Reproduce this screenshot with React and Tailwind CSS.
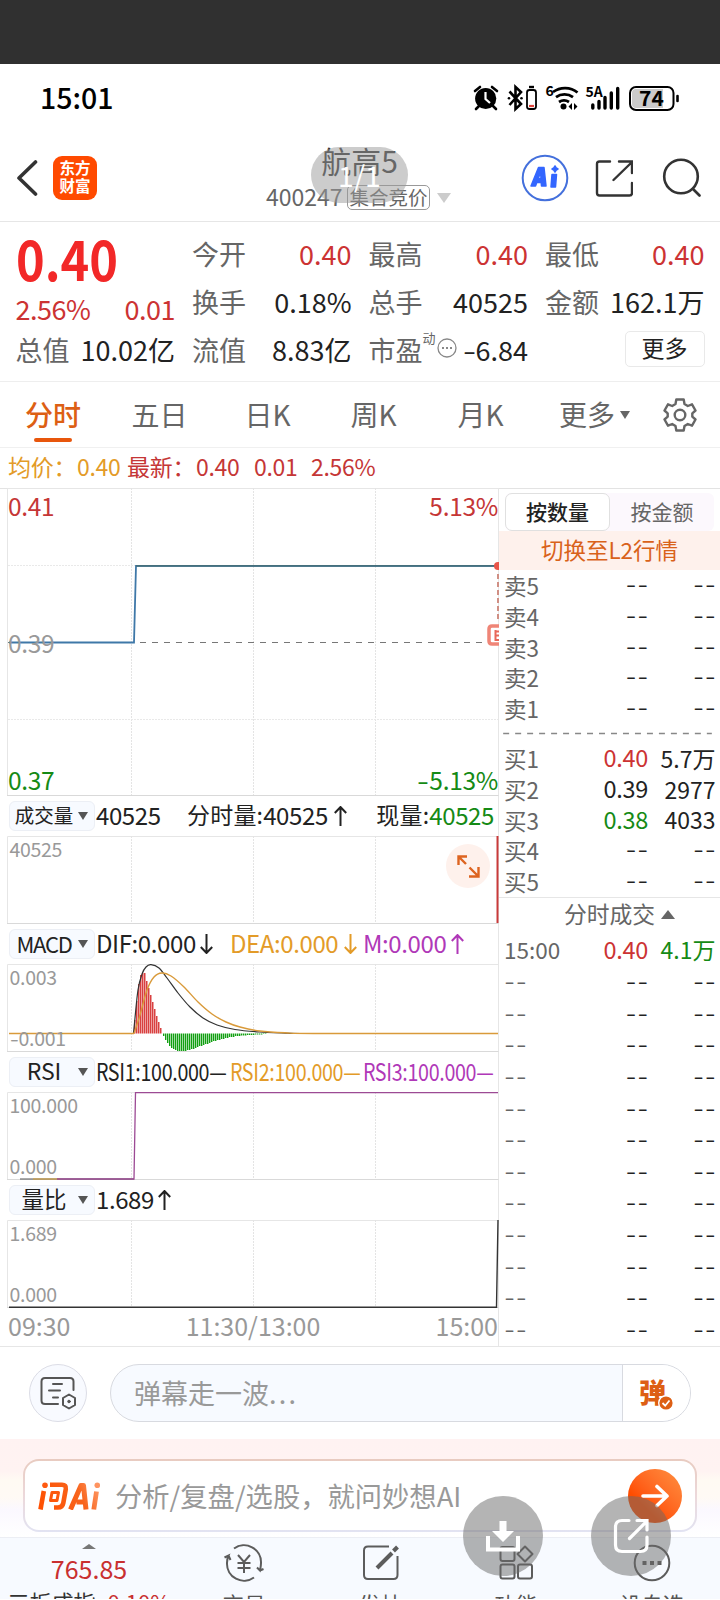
import React from "react";

const FONT = "font-['Noto_Sans_CJK_SC','Noto_Sans',sans-serif]";

/* ---------- shared pieces ---------- */

function Caret({ className = "", up = false }) {
  return (
    <svg viewBox="0 0 10 8" preserveAspectRatio="none" className={"shrink-0 " + className} fill="currentColor">
      <path d={up ? "M0 8L5 0L10 8Z" : "M0 0H10L5 8Z"} />
    </svg>
  );
}

function Arrow({ down = false, className = "" }) {
  return (
    <svg viewBox="0 0 13 20" className={"h-5 w-[13px] shrink-0 " + className} fill="none" stroke="currentColor" strokeWidth="2">
      <path d={down ? "M6.5 0V19M0.8 13L6.5 19L12.2 13" : "M6.5 20V1M0.8 7L6.5 1L12.2 7"} />
    </svg>
  );
}

function Dashes({ className = "" }) {
  return <span className={"mr-[-1px] font-['Inter',sans-serif] text-[24.500px] leading-none font-light tracking-[0.700px] " + className}>--</span>;
}

/* ---------- top bars ---------- */

function StatusBar() {
  return (
    <div className="flex h-[70px] shrink-0 items-center pl-[40px] text-black">
      <span className="w-[434px] pb-[3px] text-[28.500px] leading-none font-medium">15:01</span>
      <svg viewBox="474 86 208 28" className="h-7 w-[208px] overflow-visible" fill="none" stroke="#000" strokeWidth="2.2">
        <circle cx="485.7" cy="99.5" r="10.6" fill="#000" stroke="none" />
        <path d="M475 92L480 88M492 88L497 92M479 107L476 110M493 107L496 110" strokeLinecap="round" strokeWidth="2.6" />
        <path d="M485.5 93V100L490 104" stroke="#fff" />
        <path d="M509.500 92.500L521 105L515.500 110V88L521 93L509.500 106" strokeWidth="2.600" />
        <circle cx="509" cy="99.200" r="1.300" fill="#000" stroke="none" />
        <circle cx="521.500" cy="99.200" r="1.300" fill="#000" stroke="none" />
        <rect x="527" y="91" width="9" height="19" rx="2.500" strokeWidth="1.800" />
        <path d="M529 88H534" strokeWidth="2.4" />
        <path d="M529 107H534" stroke="#e0433a" />
        <path d="M553 93A20 20 0 0 1 577.500 93.500M556 98.200A14.500 14.500 0 0 1 573 98.200M559 103A9 9 0 0 1 569 103" strokeWidth="2.800" />
        <circle cx="563.5" cy="107.500" r="3" fill="#000" stroke="none" />
        <path d="M572 104L568.500 107.500L572 111ZM574 104L577.500 107.500L574 111Z" fill="#000" stroke="none" />
        <path d="M592.800 106V109M599 102.500V109M605 98.500V109M611.300 94V109M617.700 89.500V109" strokeWidth="3.400" strokeLinecap="round" />
        <rect x="630" y="88" width="43.500" height="23" rx="6" fill="#fff" strokeWidth="2" />
        <path d="M636 90H663V109H636Q632 109 632 105V94Q632 90 636 90Z" fill="#cbcbcb" stroke="none" />
        <path d="M677.500 97V102" strokeWidth="2.600" strokeLinecap="round" />
        <g fill="#000" stroke="none" fontFamily="Noto Sans CJK SC">
          <text x="545.500" y="97" fontSize="14" fontWeight="700">6</text>
          <text x="585.500" y="98" fontSize="14" fontWeight="700">5A</text>
          <text x="651.500" y="107" fontSize="21" fontWeight="700" textAnchor="middle">74</text>
        </g>
      </svg>
    </div>
  );
}

function Header() {
  return (
    <header className="relative flex h-[88px] shrink-0 items-center border-b border-[#e6e6e6] text-[#333]">
      <svg viewBox="0 0 24 36" className="ml-[15px] h-9 w-6" fill="none" stroke="#333" strokeWidth="3.600" strokeLinecap="round" strokeLinejoin="round">
        <path d="M20.500 2L4 18L20.500 34" />
      </svg>
      <div className="ml-[14px] flex h-[44px] w-[44px] flex-col items-center justify-center rounded-[9px] bg-[#ff4a00] pb-[3px] text-[15.500px] leading-[18px] font-bold text-white">
        <span>东方</span>
        <span>财富</span>
      </div>
      <div className="ml-[169px] flex w-[189px] flex-col items-center">
        <div className="h-[40px] pr-[2px] text-[30px] leading-[30px]">航高5</div>
        <div className="flex h-[26px] w-[189px] items-center text-[#666]">
          <span className="w-[81px] pb-[2px] text-[23px] leading-none">400247</span>
          <span className="flex h-[25px] w-[83px] items-center justify-center rounded-[5px] border border-[#999] pb-[2px] text-[19.500px] leading-none">
            集合竞价
          </span>
          <Caret className="ml-[7px] h-[10px] w-[14px] text-[#ccc]" />
        </div>
      </div>
      <svg viewBox="0 0 48 48" className="ml-[66px] h-12 w-12">
        <circle cx="24" cy="24" r="22.300" fill="#fff" stroke="#4470dc" strokeWidth="2" />
        <g fill="#3366ff" stroke="#3366ff" strokeWidth="1.500" strokeLinejoin="round">
          <path fillRule="evenodd" d="M10 32L17.500 13.500H23L25 32H20.500L20.200 28.500H15.800L14.500 32ZM17 24.500H20L19.700 19Z" />
          <path d="M31 20.500H35.500L34.500 33H30ZM34 12L35.200 14L37 15L35.200 16L34 18L32.800 16L31 15L32.800 14Z" />
        </g>
      </svg>
      <svg viewBox="0 0 38 38" className="ml-[26px] h-[38px] w-[38px]" fill="none" stroke="#333" strokeWidth="2.400" strokeLinecap="round">
        <path d="M15 2.500H4.500Q2 2.500 2 5V34Q2 36.500 4.500 36.500H34.500Q37 36.500 37 34V24M24 2.500H37V14M36 4L18.500 21" />
      </svg>
      <svg viewBox="0 0 40 40" className="ml-[27.500px] h-10 w-10" fill="none" stroke="#333" strokeWidth="2.600" strokeLinecap="round">
        <circle cx="20" cy="18.500" r="16.800" />
        <path d="M32 31L38.500 37.500" />
      </svg>
      <div className="absolute top-[13px] left-[311px] flex h-[56px] w-[97px] items-center justify-center rounded-full bg-[#999]/50 text-[28.500px] leading-none text-white">
        1/1
      </div>
    </header>
  );
}

/* ---------- quote ---------- */

function Field({ label, value, tone = "text-[#222]" }) {
  return (
    <div className="flex h-12 items-center justify-between pb-[2px] text-[27px] leading-none">
      <span className="text-[#666]">{label}</span>
      <span className={tone}>{value}</span>
    </div>
  );
}

function Quote() {
  const red = "text-[#cc3333]";
  return (
    <section className="grid h-[160px] shrink-0 grid-cols-4 gap-x-[17px] border-b border-[#eee] px-[15.500px] pt-2 whitespace-nowrap">
      <div>
        <div className="flex h-[64px] items-center">
          <span className="w-[100px] origin-left scale-x-[0.870] pb-[10px] text-[56px] leading-none font-bold text-[#f22828]">0.40</span>
        </div>
        <div className={"flex h-[32px] items-center justify-between pb-[3px] text-[27px] leading-none tracking-[-0.5px] " + red}>
          <span>2.56%</span>
          <span>0.01</span>
        </div>
        <Field label="总值" value="10.02亿" />
      </div>
      <div>
        <Field label="今开" value="0.40" tone={red} />
        <Field label="换手" value="0.18%" />
        <Field label="流值" value="8.83亿" />
      </div>
      <div>
        <Field label="最高" value="0.40" tone={red} />
        <Field label="总手" value="40525" />
        <div className="flex h-12 items-center pb-[2px] text-[27px] leading-none text-[#666]">
          <span>市盈</span>
          <span className="mb-6 text-[13px]">动</span>
          <svg viewBox="0 0 20 20" className="mb-[3px] ml-[1px] h-5 w-5 shrink-0" fill="none" stroke="#888" strokeWidth="1.300">
            <circle cx="10" cy="10" r="9" />
            <path d="M5 10H7M9 10H11M13 10H15" strokeWidth="2" />
          </svg>
          <span className="ml-auto flex text-[#222]">
            <span className="w-[13px] origin-left scale-x-[1.400]">-</span>
            <span>6.84</span>
          </span>
        </div>
      </div>
      <div>
        <Field label="最低" value="0.40" tone={red} />
        <Field label="金额" value="162.1万" />
        <button className="mt-[5px] ml-auto flex h-[36px] w-[80px] items-center justify-center rounded-[5px] border border-[#e9e9e9] pb-[4px] text-[23px] leading-none text-[#222]">
          更多
        </button>
      </div>
    </section>
  );
}

function PeriodTabs() {
  return (
    <nav className="flex h-[66px] shrink-0 items-center border-b border-[#f0f0f0] text-[28px] leading-none whitespace-nowrap text-[#666]">
      <div className="relative flex h-full w-[106px] items-center justify-center pb-[2px] font-medium text-[#dd5f14]">
        分时
        <span className="absolute bottom-[5px] left-[34px] h-[4px] w-[38px] rounded-full bg-[#e8560c]" />
      </div>
      <span className="w-[107px] pb-[2px] text-center">五日</span>
      <span className="w-[109px] pb-[2px] text-center">日K</span>
      <span className="w-[103px] pb-[2px] text-center">周K</span>
      <span className="w-[111px] pb-[2px] text-center">月K</span>
      <span className="ml-[23px] pb-[2px]">更多</span>
      <Caret className="ml-[5px] h-[8px] w-[10px]" />
      <svg viewBox="0 0 34 34" className="ml-[33px] h-[34px] w-[34px]" fill="none" stroke="#666" strokeWidth="2.400" strokeLinejoin="round">
        <path d="M13.300 1.500H20.700L21.500 6L24.800 8L29 6.300L32.500 12.500L29.300 15.300V18.700L32.500 21.500L29 27.700L24.800 26L21.500 28L20.700 32.500H13.300L12.500 28L9.200 26L5 27.700L1.500 21.500L4.700 18.700V15.300L1.500 12.500L5 6.300L9.200 8L12.500 6Z" />
        <circle cx="17" cy="17" r="5.300" />
      </svg>
    </nav>
  );
}

function PriceLine() {
  return (
    <div className="flex h-[41px] shrink-0 items-center border-b border-[#e3e3e3] pb-[3px] pl-2 text-[23px] leading-none tracking-[-0.3px] whitespace-nowrap text-[#c53636]">
      <span className="w-[69px] text-[#e39b28]">均价：</span>
      <span className="w-[50px] text-[#e39b28]">0.40</span>
      <span className="w-[69px]">最新：</span>
      <span className="w-[58px]">0.40</span>
      <span className="w-[57px]">0.01</span>
      <span>2.56%</span>
    </div>
  );
}

/* ---------- charts ---------- */

function Frame({ top, height, children, labels }) {
  const bottom = top + height - 1;
  return (
    <div className="relative leading-none">
      <svg viewBox={`0 ${top} 499 ${height}`} width="499" height={height} className="block" fill="none">
        <path d={`M7.500 ${bottom + 0.5}V${top + 0.5}H498.500`} stroke="#e6e6e6" />
        <path d={`M7 ${bottom + 0.5}H498.500`} stroke="#d9d9d9" />
        <path d={`M131.500 ${top}V${bottom}M253.500 ${top}V${bottom}M375.500 ${top}V${bottom}`} stroke="#e4e4e4" strokeDasharray="2 1" />
        {children}
      </svg>
      {labels}
    </div>
  );
}

function IndicatorBar({ name, wide = "text-[19.500px]", children }) {
  return (
    <div className="flex h-10 items-center pl-[9px] text-[24px] leading-none whitespace-nowrap text-[#222]">
      <div className="flex h-[30px] w-[86px] items-center rounded-[6px] border border-[#eceff5] bg-[#f7faff]">
        <span className={"w-[68px] pb-[3px] text-center " + wide}>{name}</span>
        <Caret className="h-[8px] w-[10px] text-[#555]" />
      </div>
      <div className="ml-[1px] flex items-center pb-[3px] tracking-[-0.4px]">{children}</div>
    </div>
  );
}

/* Smooth curve through a list of points (Catmull-Rom as cubic segments). */
function smooth(points) {
  let d = `M${points[0][0]} ${points[0][1]}`;
  for (let i = 0; i < points.length - 1; i++) {
    const p0 = points[i - 1] || points[i];
    const p1 = points[i];
    const p2 = points[i + 1];
    const p3 = points[i + 2] || p2;
    d += `C${p1[0] + (p2[0] - p0[0]) / 6} ${p1[1] + (p2[1] - p0[1]) / 6} ${p2[0] - (p3[0] - p1[0]) / 6} ${p2[1] - (p3[1] - p1[1]) / 6} ${p2[0]} ${p2[1]}`;
  }
  return d;
}

const DIF = [[133.5, 1033], [135, 1018], [138, 990], [142, 974], [146, 967], [151, 964.6], [159, 968], [167, 978], [178, 993], [190, 1007], [203, 1018], [217, 1025], [235, 1029.5], [260, 1032], [290, 1033.3], [320, 1033.5]];
const DEA = [[134, 1033.5], [140, 1015], [147, 990], [154, 977], [162, 973], [171, 976], [184, 987], [198, 1002], [212, 1014], [226, 1022], [240, 1027], [260, 1031], [285, 1032.8], [320, 1033.5], [498, 1033.5]];
const RED_TOPS = [1020, 1001, 984, 975, 973, 973, 981, 988, 995, 1002, 1009, 1016, 1022, 1028];
const GREEN_BOTTOMS = [
  1036, 1040, 1043, 1046, 1048, 1049, 1050, 1051, 1051, 1051, 1051, 1051, 1050, 1050, 1049, 1049, 1048, 1047, 1046, 1046, 1045, 1044, 1044,
  1043, 1042, 1041, 1041, 1040, 1040, 1039, 1039, 1038, 1038, 1037, 1037, 1037, 1036, 1036, 1036, 1035.500, 1035.500, 1035.500, 1035, 1035,
  1035, 1035, 1034.500, 1034.500, 1034.500, 1034.500, 1034, 1034,
];

const small = "absolute left-[9.500px] text-[19.500px] tracking-[-0.300px] text-[#999] ";

function Charts() {
  return (
    <div className="w-[499px] shrink-0">
      <Frame
        top={488}
        height={308}
        labels={
          <div className="text-[24.500px] tracking-[-0.3px]">
            <span className="absolute top-[6px] left-[8px] text-[#c53636]">0.41</span>
            <span className="absolute top-[142.500px] left-[8px] text-[#999]">0.39</span>
            <span className="absolute top-[279.500px] left-[8px] text-[#158a15]">0.37</span>
            <span className="absolute top-[6px] right-[1px] text-[#c53636]">5.13%</span>
            <span className="absolute top-[279.500px] right-[1px] flex text-[#158a15]">
              <span className="w-[12px] origin-left scale-x-[1.400]">-</span>
              <span>5.13%</span>
            </span>
          </div>
        }
      >
        <path d="M8 565.500H498M8 719.500H498" stroke="#e9e9e9" strokeDasharray="2 1" />
        <path d="M8 642.500H498" stroke="#777" strokeDasharray="6 6" />
        <path d="M9 642.500H134L136 565.800H498" stroke="#3f78a8" strokeWidth="1.800" />
        <path d="M136 565.800H498" stroke="#456f7c" strokeWidth="1.800" />
        <path d="M498 574V622" stroke="#d08f84" strokeWidth="2" strokeDasharray="5 3" />
        <circle cx="498" cy="566" r="4" fill="#e8564a" />
        <path d="M499 626H492Q489 626 489 629V641Q489 644 492 644H499" stroke="#ef8577" strokeWidth="3.500" fill="#fff" />
        <path d="M495.500 630V641M495 631.500H499M495 635.500H499M495 640H499" stroke="#e8685a" strokeWidth="2" />
      </Frame>

      <IndicatorBar name="成交量">
        <span className="w-[91px]">40525</span>
        <span className="text-[23px] tracking-[0.2px]">分时量:</span>
        <span className="mr-[6px]">40525</span>
        <Arrow className="mt-[3px]" />
        <span className="ml-[29.500px] text-[23px] tracking-[0.2px]">现量:</span>
        <span className="text-[#158a15]">40525</span>
      </IndicatorBar>
      <Frame
        top={836}
        height={88}
        labels={
          <>
            <span className={small + "top-[3px]"}>40525</span>
            <svg viewBox="0 0 44 44" className="absolute top-[8px] left-[446px] h-11 w-11" fill="none" stroke="#dd6420" strokeWidth="2.400">
              <circle cx="22" cy="22" r="22" fill="#fef1ec" stroke="none" />
              <path d="M12.500 21V12.500H21M12.500 12.500L20 20M32.500 23V32.500H23M32.500 32.500L23.500 23.500" />
            </svg>
          </>
        }
      >
        <path d="M497.500 836V923" stroke="#c93a3a" strokeWidth="2" />
      </Frame>

      <IndicatorBar name="MACD" wide="text-[22px] tracking-[-1.300px]">
        <span className="w-[104px] tracking-[-0.400px]">DIF:0.000</span>
        <Arrow down className="mt-[3px]" />
        <span className="ml-[17px] w-[114px] text-[#e39b28]">DEA:0.000</span>
        <Arrow down className="mt-[3px] text-[#e39b28]" />
        <span className="ml-[6px] w-[88px] text-[#b038b8]">M:0.000</span>
        <Arrow className="mt-[3px] text-[#b038b8]" />
      </IndicatorBar>
      <Frame
        top={964}
        height={88}
        labels={
          <>
            <span className={small + "top-[3px]"}>0.003</span>
            <span className={small + "top-[64px] flex"}>
              <span className="w-[9px] origin-left scale-x-[1.300]">-</span>
              <span>0.001</span>
            </span>
          </>
        }
      >
        {RED_TOPS.map((y, i) => (
          <rect key={i} x={134 + i * 2} y={y} width="1.500" height={1033.500 - y} fill="#d94040" />
        ))}
        {GREEN_BOTTOMS.map((y, i) => (
          <rect key={i} x={163 + i * 2} y="1033.500" width="1.400" height={y - 1033.500} fill="#12a012" />
        ))}
        <path d={smooth(DIF)} stroke="#333" strokeWidth="1.200" />
        <path d="M9 1033.500H134" stroke="#d99a3a" strokeWidth="1.400" />
        <path d={smooth(DEA)} stroke="#d99a3a" strokeWidth="1.400" />
      </Frame>

      <IndicatorBar name="RSI" wide="text-[23px]">
        <span className="w-[134px] origin-left scale-x-[0.820] text-[24px]">RSI1:100.000—</span>
        <span className="w-[133px] origin-left scale-x-[0.820] text-[24px] text-[#e39b28]">RSI2:100.000—</span>
        <span className="w-[134px] origin-left scale-x-[0.820] text-[24px] text-[#b038b8]">RSI3:100.000—</span>
      </IndicatorBar>
      <Frame
        top={1092}
        height={88}
        labels={
          <>
            <span className={small + "top-[3px]"}>100.000</span>
            <span className={small + "top-[64px]"}>0.000</span>
          </>
        }
      >
        <path d="M20 1179H134" stroke="#555" />
        <path d="M33 1179H60" stroke="#d9a030" />
        <path d="M57 1179H134L135.500 1092.700H498" stroke="#9c4a94" strokeWidth="1.300" />
      </Frame>

      <IndicatorBar name="量比" wide="text-[22.500px]">
        <span className="w-[62px]">1.689</span>
        <Arrow className="mt-[3px]" />
      </IndicatorBar>
      <Frame
        top={1220}
        height={88}
        labels={
          <>
            <span className={small + "top-[3px]"}>1.689</span>
            <span className={small + "top-[64px]"}>0.000</span>
          </>
        }
      >
        <path d="M9 1307.300H496.500L498 1220" stroke="#333" strokeWidth="1.400" />
      </Frame>

      <div className="flex h-[38px] items-center justify-between pr-[1px] pb-[3px] pl-[8px] text-[25px] leading-none text-[#999]">
        <span>09:30</span>
        <span>11:30/13:00</span>
        <span>15:00</span>
      </div>
    </div>
  );
}

/* ---------- order book ---------- */

function Cells({ a, b, c, bTone = "text-[#222]", cTone = "text-[#222]", className = "" }) {
  return (
    <div className={"flex items-center pr-[4.500px] pl-[5px] text-[22.500px] leading-none " + className}>
      <span className="w-[80px] text-[#666]">{a === "--" ? <Dashes /> : a}</span>
      <span className={"w-[64px] text-right text-[23.500px] tracking-[-0.3px] " + bTone}>{b === "--" ? <Dashes /> : b}</span>
      <span className={"flex-1 text-right text-[23px] " + cTone}>{c === "--" ? <Dashes /> : c}</span>
    </div>
  );
}

function OrderBook() {
  const red = "text-[#cc3333]";
  const green = "text-[#158a15]";
  return (
    <div className="ml-[-1px] flex h-[858px] flex-1 flex-col border-l border-[#e6e6e6] whitespace-nowrap">
      <div className="mt-[5px] ml-[6px] flex h-[38px] w-[209px] rounded-[6px] bg-[#fcf8fd] text-[21px] leading-none">
        <span className="flex w-[105px] items-center justify-center rounded-[7px] border border-[#e0e0e0] bg-white pb-[1px] font-medium text-[#222]">按数量</span>
        <span className="flex flex-1 items-center justify-center pb-[1px] text-[#666]">按金额</span>
      </div>
      <div className="flex h-[39px] items-center justify-center bg-[#fef1ec] pb-[2px] text-[22.500px] leading-none text-[#d9621a]">切换至L2行情</div>
      <div>
        {[5, 4, 3, 2, 1].map((n) => (
          <Cells key={n} a={"卖" + n} b="--" c="--" className="h-[30.800px]" />
        ))}
      </div>
      <svg viewBox="0 0 216 19" className="h-[19px] w-[216px]" fill="none">
        <path d="M4 9.500H213" stroke="#888" strokeWidth="1.300" strokeDasharray="6 6" />
      </svg>
      <div>
        <Cells a="买1" b="0.40" c="5.7万" bTone={red} className="h-[30.800px]" />
        <Cells a="买2" b="0.39" c="2977" className="h-[30.800px]" />
        <Cells a="买3" b="0.38" c="4033" bTone={green} className="h-[30.800px]" />
        <Cells a="买4" b="--" c="--" className="h-[30.800px]" />
        <Cells a="买5" b="--" c="--" className="h-[30.800px]" />
      </div>
      <div className="flex h-[38px] items-center justify-center border-t border-[#e6e6e6] pl-[20px] text-[22.800px] leading-none text-[#666]">
        <span className="pb-[3px]">分时成交</span>
        <Caret up className="mb-[3px] ml-[6px] h-[9px] w-[14px]" />
      </div>
      <Cells a="15:00" b="0.40" c="4.1万" bTone={red} cTone={green} className="h-[31.700px] pb-[2px]" />
      {Array.from({ length: 12 }, (_, i) => (
        <Cells key={i} a="--" b="--" c="--" className="h-[31.700px]" />
      ))}
    </div>
  );
}

/* ---------- bottom ---------- */

function CommentBar() {
  return (
    <div className="flex h-[93px] shrink-0 items-center border-t border-[#e6e6e6]">
      <div className="ml-[29px] flex h-[58px] w-[58px] items-center justify-center rounded-full border border-[#dcdde6] bg-[#f8faff]">
        <svg viewBox="0 0 36 34" className="h-[34px] w-9" fill="none" stroke="#555" strokeWidth="2" strokeLinecap="round">
          <path d="M18 28H5Q1.500 28 1.500 24.500V5.500Q1.500 2 5 2H30Q33.500 2 33.500 5.500V14M13 8H22M9 14.500H20M13 21.500H18" />
          <path d="M29 18.500L35 22V29L29 32.500L23 29V22Z" strokeLinejoin="round" />
          <circle cx="29" cy="25.500" r="1.300" fill="#555" stroke="#555" strokeWidth="1" />
        </svg>
      </div>
      <div className="ml-[23px] flex h-[58px] w-[581px] overflow-hidden rounded-full border border-[#d8dae0] bg-[#f7faff]">
        <span className="flex-1 pl-[23px] text-[27px] leading-[55px] text-[#999]">
          弹幕走一波<span className="tracking-[2.200px]">...</span>
        </span>
        <span className="flex w-[68px] items-center border-l border-[#d8dae0] bg-white pl-[16px]">
          <span className="relative pb-[3px] text-[27px] leading-none font-black text-[#dd5f14]">
            弹
            <svg viewBox="0 0 16 16" className="absolute top-[17px] left-[19px] h-4 w-4" fill="none">
              <circle cx="8" cy="8" r="7.300" fill="#dd5f14" stroke="#fff" strokeWidth="1.400" />
              <path d="M4.500 8L7.200 10.700L11.500 5.500" stroke="#fff" strokeWidth="1.800" />
            </svg>
          </span>
        </span>
      </div>
    </div>
  );
}

function AskBar() {
  return (
    <div className="h-[98px] shrink-0 bg-[linear-gradient(#fff2f2_0%,#fff3f2_33%,#fffaf3_42%,#fffaf5_60%,#fbf8ff_72%,#fff_100%)] px-[23px] pt-[20px]">
      <div className="h-[73px] rounded-[16px] bg-[linear-gradient(#e8cbc0,#ecd8da_50%,#e2e3f2)] p-[2px]">
        <div className="flex h-full items-center rounded-[14px] bg-white pl-[13px]">
          <svg viewBox="0 0 62 28" className="h-7 w-[62px]">
            <defs>
              <linearGradient id="ask" gradientUnits="userSpaceOnUse" x1="0" y1="28" x2="62" y2="0">
                <stop offset="0" stopColor="#ff4f00" />
                <stop offset="0.650" stopColor="#f8641c" />
                <stop offset="1" stopColor="#ffa070" />
              </linearGradient>
            </defs>
            <g fill="none" stroke="url(#ask)" strokeLinejoin="round">
              <path d="M5.800 9L2.500 27.500" strokeWidth="4.600" />
              <path d="M12 2.800H24Q28.500 2.800 27.800 7L25.300 21Q24.500 25.500 20 25.500H16" strokeWidth="4.600" />
              <path d="M14 10.500H20.500L19 18.500H12.500Z" strokeWidth="3" />
              <path d="M32.500 27.500L43 3.500H45.500L48 27.500M38.500 20H47" strokeWidth="5" />
              <path d="M58.500 9.500L55.800 27.500" strokeWidth="4.800" />
            </g>
            <circle cx="7" cy="3.300" r="2.800" fill="#ff5a10" />
            <circle cx="59.300" cy="3.200" r="2.800" fill="#ff9460" />
          </svg>
          <span className="ml-[15px] text-[27.300px] leading-none whitespace-nowrap text-[#999]">分析/复盘/选股，就问妙想AI</span>
          <span className="mr-[13px] ml-auto flex h-[54px] w-[54px] items-center justify-center rounded-full bg-linear-to-tr from-[#ff4d00] from-30% to-[#ff9040]">
            <svg viewBox="0 0 28 24" className="h-6 w-7" fill="none" stroke="#fff" strokeWidth="3.600" strokeLinecap="round" strokeLinejoin="round">
              <path d="M2 12H26M16 2.500L26 12L16 21.500" />
            </svg>
          </span>
        </div>
      </div>
    </div>
  );
}

function NavItem({ label, className, children }) {
  return (
    <div className={"flex flex-col items-center " + className}>
      <svg viewBox="0 0 44 40" className="mt-[5px] h-10 w-11 shrink-0" fill="none" stroke="#5c5c5c" strokeWidth="2">
        {children}
      </svg>
      <span className="mt-[8px]">{label}</span>
    </div>
  );
}

function BottomNav() {
  return (
    <nav className="flex h-[62px] shrink-0 overflow-hidden border-t border-[#eceef4] bg-[#f7faff] text-[21.500px] leading-[26px] whitespace-nowrap text-[#555]">
      <div className="flex w-[178px] flex-col items-center text-[#c92f2f]">
        <Caret up className="mt-[6px] h-[5px] w-[14px] text-[#777]" />
        <span className="mt-[6px] text-[25px] leading-[26px]">765.85</span>
        <span className="mt-[7px] flex w-[163px] justify-between text-[22px]">
          <span className="text-[#333]">三板成指</span>
          <span>0.10%</span>
        </span>
      </div>
      <NavItem label="交易" className="w-[132px]">
        <path d="M12 5.500A17 17 0 0 1 39 20Q39 23 38 27.500L35 24.500M38 27.500L41.500 26M32 34.500A17 17 0 0 1 5 20Q5 16 6.500 12.500L2.500 14.500M6.500 12.500L8.500 17" />
        <path d="M16 12L22 19L28 12M22 19V30M15.500 20H28.500M15.500 25H28.500" />
      </NavItem>
      <NavItem label="发帖" className="w-[141px]">
        <path d="M30 3.500H9Q5 3.500 5 7.500V32Q5 36 9 36H34.500Q38.500 36 38.500 32V13" />
        <path d="M18 25L33 10" strokeWidth="4" />
        <path d="M34.500 8L38.500 4" strokeWidth="4" />
      </NavItem>
      <NavItem label="功能" className="w-[130px]">
        <rect x="6.500" y="4" width="14" height="14" rx="2" />
        <path d="M31 3.500L38.500 11L31 18.500L23.500 11Z" strokeLinejoin="round" />
        <rect x="6.500" y="21.500" width="14" height="14" rx="2" />
        <rect x="24" y="21.500" width="14" height="14" rx="2" />
      </NavItem>
      <NavItem label="设自选" className="flex-1 pl-[3px]">
        <circle cx="22" cy="20" r="17.300" />
        <path d="M12.500 20H16.500M20 20H24M27.500 20H31.500" strokeWidth="4" />
      </NavItem>
    </nav>
  );
}

export default function App() {
  return (
    <div className={"relative flex h-[1600px] w-[720px] flex-col overflow-hidden bg-white " + FONT}>
      <div className="h-16 shrink-0 bg-[#303030]" />
      <StatusBar />
      <Header />
      <Quote />
      <PeriodTabs />
      <PriceLine />
      <main className="mt-[-1px] flex h-[858px] shrink-0">
        <Charts />
        <OrderBook />
      </main>
      <CommentBar />
      <AskBar />
      <BottomNav />
      <div className="absolute top-[1496px] left-[463px] flex h-[80px] w-[80px] items-center justify-center rounded-full bg-[#6a6a6a]/50">
        <svg viewBox="0 0 34 32" className="h-8 w-[34px]" fill="#fff">
          <path d="M13.500 1H20.500V11H28L17 22L6 11H13.500Z" />
          <path d="M2 16V29.500H32V16" fill="none" stroke="#fff" strokeWidth="4" />
        </svg>
      </div>
      <div className="absolute top-[1496px] left-[591px] flex h-[80px] w-[80px] items-center justify-center rounded-full bg-[#6a6a6a]/50">
        <svg viewBox="0 0 36 36" className="h-9 w-9" fill="none" stroke="#fff" strokeWidth="3.200" strokeLinecap="round">
          <path d="M16 2.500H9Q2.500 2.500 2.500 9V27Q2.500 33.500 9 33.500H27.500Q34 33.500 34 27V19M24 2.500H34V12M33 4L16.500 20.500" />
        </svg>
      </div>
    </div>
  );
}
